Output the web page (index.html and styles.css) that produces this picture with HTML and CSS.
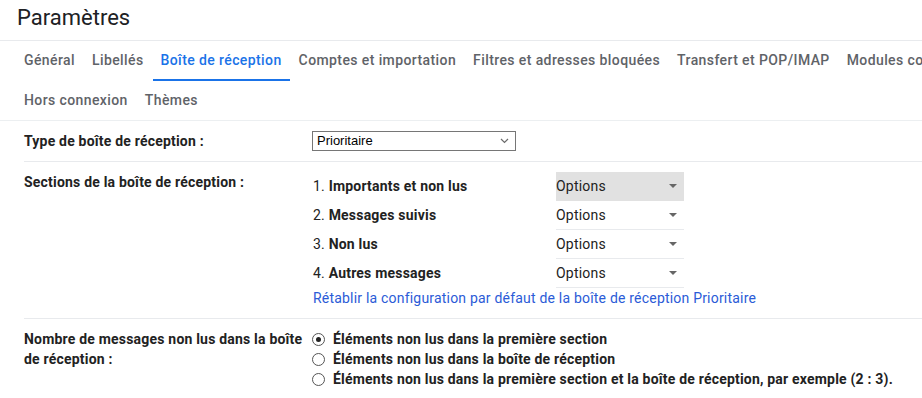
FILE: index.html
```html
<!DOCTYPE html>
<html lang="fr">
<head>
  <meta charset="UTF-8" />
  <title>Paramètres</title>
  <link rel="stylesheet" href="styles.css">
</head>
<body>
  <div class="page">
    <h1 class="title">Paramètres</h1>

    <div class="tabs">
      <div class="tab-row">
        <a class="tab">Général</a>
        <a class="tab">Libellés</a>
        <a class="tab active">Boîte de réception</a>
        <a class="tab">Comptes et importation</a>
        <a class="tab">Filtres et adresses bloquées</a>
        <a class="tab">Transfert et POP/IMAP</a>
        <a class="tab">Modules complémentaires</a>
      </div>
      <div class="tab-row">
        <a class="tab">Hors connexion</a>
        <a class="tab">Thèmes</a>
      </div>
    </div>

    <div class="settings">
      <!-- type -->
      <div class="setting">
        <div class="setting-label">Type de boîte de réception :</div>
        <div class="setting-value">
          <div class="select-box">
            <span>Prioritaire</span>
            <svg width="9" height="6" viewBox="0 0 9 6"><path d="M1 1l3.5 3.5L8 1" fill="none" stroke="#6b6b6b" stroke-width="1.2"/></svg>
          </div>
        </div>
      </div>

      <!-- sections -->
      <div class="setting">
        <div class="setting-label">Sections de la boîte de réception :</div>
        <div class="setting-value">
          <div class="section-list">
            <div class="section-name">1. <b>Importants et non lus</b></div>
            <div class="options hover">Options <span class="caret"></span></div>
            <div class="section-name">2. <b>Messages suivis</b></div>
            <div class="options">Options <span class="caret"></span></div>
            <div class="section-name">3. <b>Non lus</b></div>
            <div class="options">Options <span class="caret"></span></div>
            <div class="section-name">4. <b>Autres messages</b></div>
            <div class="options">Options <span class="caret"></span></div>
          </div>
          <a class="link">Rétablir la configuration par défaut de la boîte de réception Prioritaire</a>
        </div>
      </div>

      <!-- unread count -->
      <div class="setting">
        <div class="setting-label">Nombre de messages non lus dans la boîte de réception :</div>
        <div class="setting-value radios">
          <label class="radio"><span class="dot checked"></span>Éléments non lus dans la première section</label>
          <label class="radio"><span class="dot"></span>Éléments non lus dans la boîte de réception</label>
          <label class="radio"><span class="dot"></span>Éléments non lus dans la première section et la boîte de réception, par exemple (2 : 3).</label>
        </div>
      </div>
    </div>
  </div>
</body>
</html>
```

FILE: styles.css
```css
body {
  margin: 0;
  background: #fff;
  font-family: Roboto, "Liberation Sans", sans-serif;
  font-size: 14px;
  color: #222;
  overflow: hidden;
}

.page {
  width: 922px;
  overflow: hidden;
}

.title {
  margin: 0;
  height: 40px;
  padding-left: 17px;
  font-size: 22px;
  font-weight: 400;
  line-height: 36px;
  color: #202124;
  border-bottom: 1px solid #e8eaed;
}

.tabs {
  padding-left: 16px;
  border-bottom: 1px solid #eceff1;
}

.tab-row {
  display: flex;
  height: 40px;
  white-space: nowrap;
}

.tab-row + .tab-row {
  height: 39px;
}

.tab {
  display: block;
  padding: 0 8px;
  margin-right: 1px;
  line-height: 39px;
  font-weight: 500;
  letter-spacing: 0.4px;
  color: #5f6368;
  border-bottom: 2px solid transparent;
}

.tab.active {
  color: #1a73e8;
  border-bottom-color: #1a73e8;
}

.settings {
  margin-left: 24px;
  letter-spacing: 0.2px;
}

.setting {
  display: grid;
  grid-template-columns: 288px 1fr;
  padding: 10px 0;
  border-bottom: 1px solid #e8eaed;
  line-height: 20px;
}

.setting:last-child {
  border-bottom: none;
}

.setting-label {
  font-weight: 700;
  padding-right: 6px;
  color: #222;
}

.select-box {
  width: 192px;
  height: 18px;
  border: 1px solid #767676;
  display: flex;
  align-items: center;
  justify-content: space-between;
  padding: 0 6px 0 4px;
  font-family: "Liberation Sans", Arial, sans-serif;
  font-size: 13px;
  letter-spacing: 0;
  color: #000;
}

.section-list {
  display: grid;
  grid-template-columns: 243px 128px;
  margin-left: 1px;
}

.section-name {
  height: 29px;
  line-height: 29px;
}

.section-name b {
  font-weight: 700;
}

.options {
  height: 28px;
  line-height: 28px;
  padding: 0 7px 0 0;
  border-bottom: 1px solid #e8eaed;
  display: flex;
  justify-content: space-between;
  align-items: center;
}

.options.hover {
  background: #e1e1e1;
  border-bottom-color: transparent;
}

.caret {
  width: 0;
  height: 0;
  border-left: 4px solid transparent;
  border-right: 4px solid transparent;
  border-top: 4px solid #666;
}

.link {
  display: block;
  margin-left: 1px;
  color: #2b5bd7;
  cursor: pointer;
}

.radios {
  display: flex;
  flex-direction: column;
}

.radio {
  display: flex;
  align-items: center;
  font-weight: 700;
  height: 20px;
}

.dot {
  width: 11px;
  height: 11px;
  border: 1px solid #555;
  border-radius: 50%;
  margin-right: 8px;
  position: relative;
  flex: none;
}

.dot.checked::after {
  content: "";
  position: absolute;
  left: 3px;
  top: 3px;
  width: 5px;
  height: 5px;
  border-radius: 50%;
  background: #222;
}
```
